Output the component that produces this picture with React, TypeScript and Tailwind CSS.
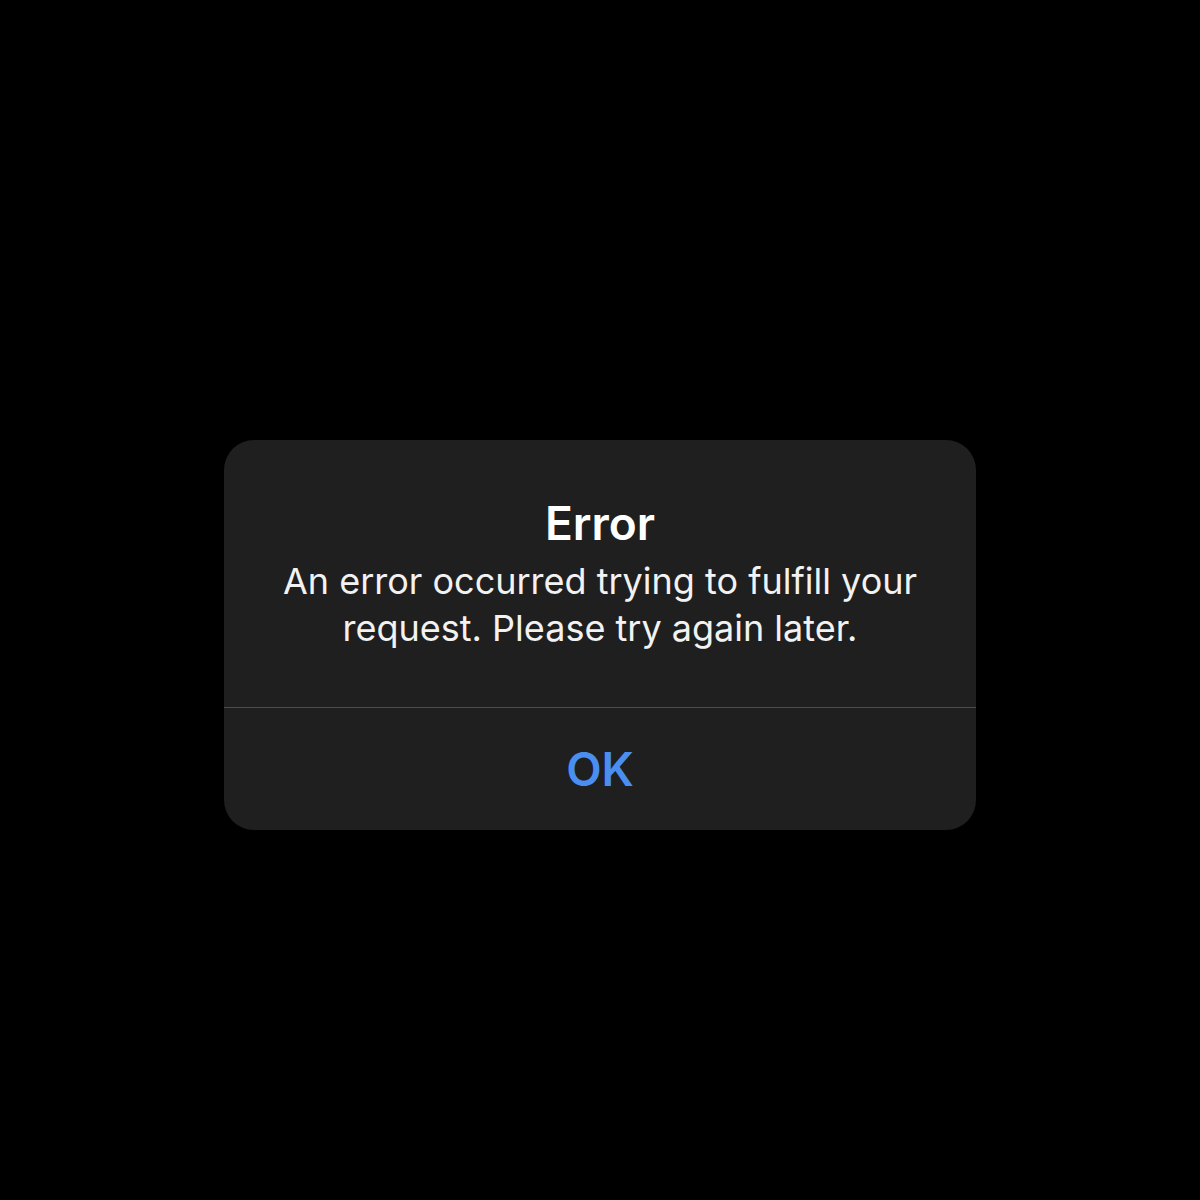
export default function App() {
  return (
    <main className="flex h-[1200px] w-full items-center justify-center bg-black pt-[70px] font-['Inter','Noto_Sans',sans-serif]">
      {/* boîte d'alerte façon iOS */}
      <div className="flex h-[390px] w-[752px] flex-col overflow-hidden rounded-[30px] bg-[#1f1f1f]">
        <div className="flex h-[267px] flex-col items-center pt-[57px] text-center text-white">
          <h1 className="text-[46px] font-semibold leading-[52px]">Error</h1>
          <p className="mt-[9px] text-[36px] leading-[47px] text-[#f2f2f2]">
            An error occurred trying to fulfill your
            <br />
            request. Please try again later.
          </p>
        </div>
        <div className="h-px bg-[#4d4d4d]" />
        <button className="flex flex-1 items-center justify-center text-[46px] font-semibold text-[#4a8ff0]">
          OK
        </button>
      </div>
    </main>
  );
}
